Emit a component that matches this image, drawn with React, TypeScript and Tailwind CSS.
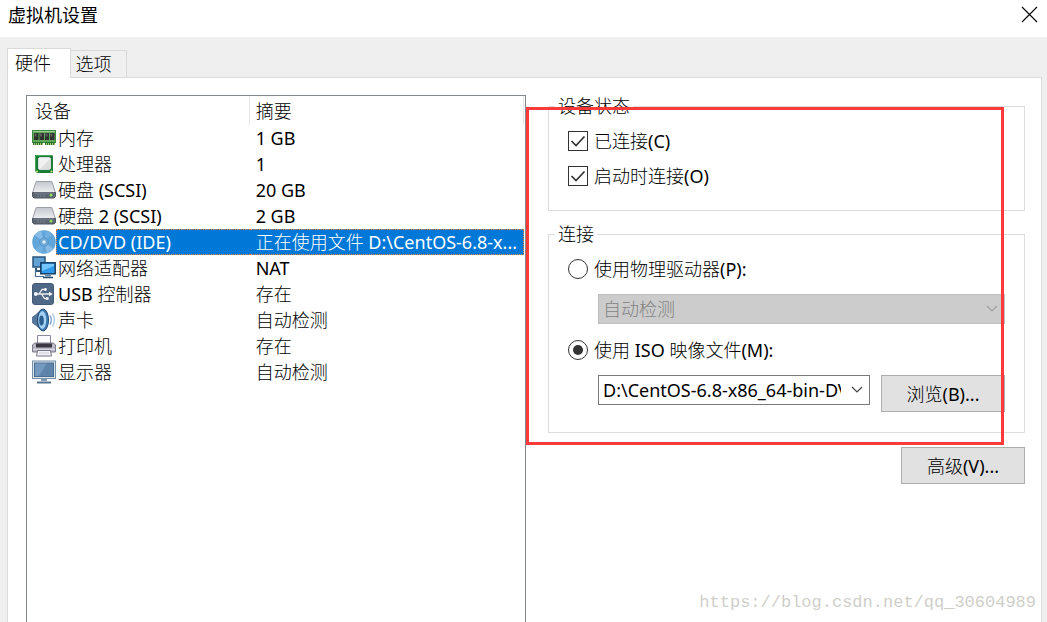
import { useState } from "react";
import type { ReactNode } from "react";
import clsx from "clsx";

const MemoryIcon = () => (
  <svg width="24" height="24" viewBox="0 0 24 24" aria-hidden="true">
    <rect x="0.5" y="4.5" width="23" height="12" fill="#5fa85a" stroke="#3a8a3f" />
    <path d="M1 5.5h22" stroke="#9bd193" />
    <path d="M2 7h4.5v7H2zM7.5 7H12v7H7.5zM13 7h4v7h-4zM18 7h4.5v7H18z" fill="#2f312f" />
    <path d="M2.5 7.5h2v3h-2zM8 7.5h2v3H8zM13.500 7.500h2v3h-2zM18.500 7.500h2v3h-2z" fill="#5d605d" />
    <path d="M1 17.500h10M13 17.500h10" stroke="#2a7433" strokeWidth="3" />
    <path d="M2 18h9M14 18h9" stroke="#a9c568" strokeWidth="2" strokeDasharray="1 1" />
  </svg>
);

const CpuIcon = () => (
  <svg width="24" height="24" viewBox="0 0 24 24" aria-hidden="true">
    <path d="M3 3h17l1 1v17H5l-2-2z" fill="#1c7d36" />
    <path d="M4 3.500h16M3.500 4v15" stroke="#43a657" />
    <path d="M7.500 5.500h10l1 1v10l-1 1h-10l-1-1v-10z" fill="#f1f1f1" stroke="#d9d9d9" />
    <path d="M18 7v10H8z" fill="#dedede" />
    <circle cx="5" cy="19.500" r="1" fill="#d9e87a" />
    <circle cx="19.500" cy="19.500" r="1" fill="#d9e87a" />
  </svg>
);

const DiskIcon = () => (
  <svg width="24" height="24" viewBox="0 0 24 24" aria-hidden="true">
    <defs>
      <linearGradient id="disk-lid" x1="0" y1="0" x2="0" y2="1">
        <stop offset="0" stopColor="#c3c7cd" />
        <stop offset="1" stopColor="#eceef1" />
      </linearGradient>
    </defs>
    <path d="M5 3.500h14q1 0 1.300 1l3 10H.7l3-10q.3-1 1.300-1z" fill="url(#disk-lid)" stroke="#9a9fa9" />
    <path d="M.5 14.500h23v4l-1.500 1.500H2L.5 18.500z" fill="#5d6673" stroke="#505762" />
    <path d="M2 15h20" stroke="#7f8793" />
    <path d="M6 16v3M9 16v3M12 16v3" stroke="#747d8a" />
    <circle cx="19" cy="17.200" r="1.400" fill="#8ee04e" />
  </svg>
);

const DiscIcon = () => (
  <svg width="24" height="24" viewBox="0 0 24 24" aria-hidden="true">
    <circle cx="12" cy="12" r="11.800" fill="#62a5d9" />
    <path d="M12 12L2.500 5A12 12 0 0 1 9 .6zM12 12l9.500 7a12 12 0 0 1-6.500 4.400z" fill="#86bce6" />
    <path d="M12 12L14 .4a12 12 0 0 1 6.500 3.400zM12 12l-2 11.600a12 12 0 0 1-7-4z" fill="#72b0df" />
    <circle cx="12" cy="12" r="4.300" fill="#6faad7" stroke="#4b8dc2" strokeWidth=".7" />
    <circle cx="12" cy="12" r="1.700" fill="#e0eef8" />
  </svg>
);

const NetworkIcon = () => (
  <svg width="24" height="24" viewBox="0 0 24 24" aria-hidden="true">
    <rect x="1" y="1" width="12" height="10" fill="#62a3d3" stroke="#28567f" strokeWidth="1.500" />
    <path d="M4 12v3h6" fill="none" stroke="#31597c" strokeWidth="2" />
    <path d="M3.500 14v6.500H12" fill="none" stroke="#467096" strokeWidth="1.200" />
    <rect x="8.800" y="6.800" width="14.400" height="11" fill="#2f9bed" stroke="#173f65" strokeWidth="1.500" />
    <path d="M10 8h12v2l-12 5z" fill="#73c6ff" />
    <path d="M13 18.500h6v2h-6z" fill="#5f87a8" />
    <path d="M11 21.500h10" stroke="#254b6d" strokeWidth="1.500" />
  </svg>
);

const UsbIcon = () => (
  <svg width="24" height="24" viewBox="0 0 24 24" aria-hidden="true">
    <rect x=".5" y="1.500" width="21" height="21" rx="2.500" fill="#4f6885" stroke="#435b77" />
    <path d="M4 12h14M7 12l3-4.500h3.500M9.500 12l3 4.500H15" fill="none" stroke="#e9eef3" strokeWidth="1.300" />
    <circle cx="3.800" cy="12" r="1.900" fill="#f4f7f9" />
    <path d="M17 9.800l3.800 2.200-3.800 2.200z" fill="#f4f7f9" />
    <circle cx="13.500" cy="7.500" r="1.400" fill="#f4f7f9" />
    <path d="M14 15.200h2.600v2.600H14z" fill="#f4f7f9" />
  </svg>
);

const SoundIcon = () => (
  <svg width="24" height="24" viewBox="0 0 24 24" aria-hidden="true">
    <path d="M.5 9l3-2L10 1v21.500L3.500 17l-3-2z" fill="#58779c" stroke="#3e5c80" strokeWidth=".7" />
    <ellipse cx="11" cy="12" rx="5.500" ry="11" fill="#3c7cb4" stroke="#274b70" />
    <ellipse cx="10.300" cy="12" rx="4" ry="9" fill="#a5d2f2" />
    <ellipse cx="9.500" cy="12.500" rx="2.300" ry="5" fill="#2c5f8f" />
    <path d="M18 7.500q2.500 4.500 0 9" fill="none" stroke="#7da4cb" strokeWidth="1.400" />
    <path d="M20.500 5.500q3.700 6.500 0 13" fill="none" stroke="#a9c4df" strokeWidth="1.300" />
  </svg>
);

const PrinterIcon = () => (
  <svg width="24" height="24" viewBox="0 0 24 24" aria-hidden="true">
    <path d="M5.500 1.500h13v9h-13z" fill="#fbfbfd" stroke="#8a869b" />
    <path d="M2.500 9h19l2 2v7H.5v-7z" fill="#b9b8c5" stroke="#7d7a8c" />
    <path d="M4 9.500h16v4H4z" fill="#3b3844" />
    <path d="M1 15.500h22" stroke="#d9d8e1" />
    <path d="M5.500 16.500h13l1 5.500h-15z" fill="#f3f2f7" stroke="#777389" />
    <path d="M7 19h10" stroke="#cbc9d6" />
  </svg>
);

const MonitorIcon = () => (
  <svg width="24" height="24" viewBox="0 0 24 24" aria-hidden="true">
    <rect x=".5" y="1" width="23" height="17.500" fill="#dbe5ee" stroke="#7590a9" />
    <rect x="2.500" y="3" width="19" height="13.500" fill="#5d84ab" stroke="#4a6d90" />
    <path d="M3 3.500h12L7 16H3z" fill="#7299be" />
    <path d="M9 19h6v2H9z" fill="#7e9ab3" />
    <path d="M5 22.500h14" stroke="#547492" strokeWidth="2" />
  </svg>
);

type Device = { id: string; name: string; summary: string; icon: ReactNode };

const devices: Device[] = [
  { id: "memory", name: "内存", summary: "1 GB", icon: <MemoryIcon /> },
  { id: "cpu", name: "处理器", summary: "1", icon: <CpuIcon /> },
  { id: "disk1", name: "硬盘 (SCSI)", summary: "20 GB", icon: <DiskIcon /> },
  { id: "disk2", name: "硬盘 2 (SCSI)", summary: "2 GB", icon: <DiskIcon /> },
  { id: "cd", name: "CD/DVD (IDE)", summary: "正在使用文件 D:\\CentOS-6.8-x...", icon: <DiscIcon /> },
  { id: "net", name: "网络适配器", summary: "NAT", icon: <NetworkIcon /> },
  { id: "usb", name: "USB 控制器", summary: "存在", icon: <UsbIcon /> },
  { id: "sound", name: "声卡", summary: "自动检测", icon: <SoundIcon /> },
  { id: "printer", name: "打印机", summary: "存在", icon: <PrinterIcon /> },
  { id: "display", name: "显示器", summary: "自动检测", icon: <MonitorIcon /> },
];

function DeviceTable() {
  const [selected, setSelected] = useState("cd");
  return (
    <div className="border border-b-0 border-[#828790] bg-white pr-px">
      <table className="w-full table-fixed border-separate border-spacing-0 text-left">
        <thead>
          <tr className="h-[29px]">
            <th className="w-[44.8%] border-r border-[#e5e5e5] p-0 pl-2 font-normal">设备</th>
            <th className="border-r border-[#e5e5e5] p-0 pl-[6px] font-normal">摘要</th>
          </tr>
        </thead>
        <tbody>
          {devices.map((d) => {
            const active = d.id === selected;
            return (
              <tr key={d.id} className="cursor-default" onClick={() => setSelected(d.id)}>
                <td className="p-0 pl-[5px]">
                  <div className="flex h-[26px] items-center">
                    <span className="flex w-6 shrink-0">{d.icon}</span>
                    <span
                      className={clsx(
                        "h-[26px] min-w-0 flex-1 truncate border-y border-l border-dotted pl-px leading-6",
                        active ? "border-[#ff8728] bg-[#0078d7] text-white" : "border-transparent",
                      )}
                    >
                      {d.name}
                    </span>
                  </div>
                </td>
                <td className="p-0">
                  <div
                    className={clsx(
                      "h-[26px] overflow-hidden border-y border-r border-dotted pl-[6px] leading-6 whitespace-nowrap",
                      active ? "border-[#ff8728] bg-[#0078d7] text-white" : "border-transparent",
                    )}
                  >
                    {d.summary}
                  </div>
                </td>
              </tr>
            );
          })}
        </tbody>
      </table>
    </div>
  );
}

function Check({ label, defaultChecked }: { label: string; defaultChecked?: boolean }) {
  return (
    <label className="flex h-5 items-center gap-[6px]">
      <span className="relative flex size-5 shrink-0">
        <input
          type="checkbox"
          defaultChecked={defaultChecked}
          className="peer size-5 appearance-none border border-[#333] bg-white"
        />
        <svg
          className="pointer-events-none absolute inset-0 hidden peer-checked:block"
          width="20"
          height="20"
          viewBox="0 0 20 20"
          aria-hidden="true"
        >
          <path d="M3.500 10l4.500 4.500L16.500 5.500" fill="none" stroke="#333" strokeWidth="1.700" />
        </svg>
      </span>
      {label}
    </label>
  );
}

function Radio({ label, checked, onChange }: { label: string; checked: boolean; onChange: () => void }) {
  return (
    <label className="flex h-5 items-center gap-[6px]">
      <span className="relative flex size-5 shrink-0">
        <input
          type="radio"
          name="source"
          checked={checked}
          onChange={onChange}
          className="peer size-5 appearance-none rounded-full border border-[#333] bg-white"
        />
        <span className="pointer-events-none absolute inset-[5px] hidden rounded-full bg-[#333] peer-checked:block" />
      </span>
      {label}
    </label>
  );
}

function Combo({ label, value, disabled }: { label: string; value: string; disabled?: boolean }) {
  return (
    <div className={clsx("relative min-w-0 flex-1", disabled ? "text-[#a0a0a0]" : "text-[#444]")}>
      <select
        aria-label={label}
        disabled={disabled}
        className={clsx(
          "block h-[30px] w-full appearance-none border pr-7 pl-1 opacity-100",
          disabled ? "border-[#bfbfbf] bg-[#ccc] text-[#838383]" : "border-[#7a7a7a] bg-white text-black",
        )}
      >
        <option>{value}</option>
      </select>
      <svg
        className="pointer-events-none absolute top-[11px] right-[7px]"
        width="12"
        height="8"
        viewBox="0 0 12 8"
        aria-hidden="true"
      >
        <path d="M1 1l5 5 5-5" fill="none" stroke="currentColor" strokeWidth="1.200" />
      </svg>
    </div>
  );
}

function PushButton({ children }: { children: ReactNode }) {
  return (
    <button
      type="button"
      className="h-[37px] w-[124px] shrink-0 border border-[#adadad] bg-[#e1e1e1]"
    >
      {children}
    </button>
  );
}

export default function App() {
  const [source, setSource] = useState<"drive" | "iso">("iso");
  return (
    <div className="relative flex min-h-screen flex-col overflow-hidden bg-[#efefef] font-['Noto_Sans','Noto_Sans_CJK_SC_Light','Noto_Sans_CJK_SC',sans-serif] text-lg leading-[22px] text-black">
      <header className="flex h-[37px] items-start justify-between bg-white pr-[9px] pl-2">
        <h1 className="pt-[3px] font-['Noto_Sans_CJK_SC',sans-serif]">虚拟机设置</h1>
        <button type="button" aria-label="关闭" className="pt-[6px]">
          <svg width="17" height="17" viewBox="0 0 17 17" aria-hidden="true">
            <path d="M1 1l15 15M16 1L1 16" stroke="#000" strokeWidth="1.100" />
          </svg>
        </button>
      </header>

      <main className="flex flex-1 flex-col pt-[11px] pr-[5px] pl-[7px]">
        <div role="tablist" className="relative z-10 -mb-px flex items-end">
          <button
            type="button"
            role="tab"
            aria-selected="true"
            className="h-[30px] w-16 border border-b-0 border-[#d9d9d9] bg-white pr-3 pb-px"
          >
            硬件
          </button>
          <button
            type="button"
            role="tab"
            aria-selected="false"
            className="h-7 w-14 border border-l-0 border-[#d9d9d9] bg-[#f0f0f0] pr-[10px]"
          >
            选项
          </button>
        </div>

        <div className="grid flex-1 grid-cols-[500fr_477fr] gap-[22px] border border-b-0 border-[#dcdcdc] bg-white pt-[17px] pr-4 pl-[18px]">
          <DeviceTable />

          <div className="relative flex min-w-0 flex-col">
            <fieldset className="mb-3 min-w-0 border border-[#dcdcdc] px-[19px] pt-[14px] pb-6">
              <legend className="-ml-[13px] px-[3px]">设备状态</legend>
              <div className="flex flex-col gap-[15px]">
                <Check label="已连接(C)" defaultChecked />
                <Check label="启动时连接(O)" defaultChecked />
              </div>
            </fieldset>

            <fieldset className="min-w-0 border border-[#dcdcdc] px-[19px] pt-[14px] pb-[20px]">
              <legend className="-ml-[13px] px-[3px]">连接</legend>
              <Radio label="使用物理驱动器(P):" checked={source === "drive"} onChange={() => setSource("drive")} />
              <div className="mt-[15px] mb-4 flex pl-[30px]">
                <Combo label="物理驱动器" value="自动检测" disabled={source === "iso"} />
              </div>
              <Radio label="使用 ISO 映像文件(M):" checked={source === "iso"} onChange={() => setSource("iso")} />
              <div className="mt-[15px] flex items-start gap-[11px] pl-[30px]">
                <Combo
                  label="ISO 映像文件"
                  value="D:\CentOS-6.8-x86_64-bin-DVD1.iso"
                  disabled={source === "drive"}
                />
                <PushButton>浏览(B)...</PushButton>
              </div>
            </fieldset>

            <div className="mt-[14px] flex justify-end">
              <PushButton>高级(V)...</PushButton>
            </div>

            <div className="pointer-events-none absolute top-3 right-[21px] -left-[22px] h-[338px] border-[3px] border-[#fb3a3a]" />
          </div>
        </div>
      </main>

      <p className="pointer-events-none absolute right-[11px] bottom-2 font-['Liberation_Mono',monospace] text-[17px] text-[#cfcfca]">
        https://blog.csdn.net/qq_30604989
      </p>
    </div>
  );
}
